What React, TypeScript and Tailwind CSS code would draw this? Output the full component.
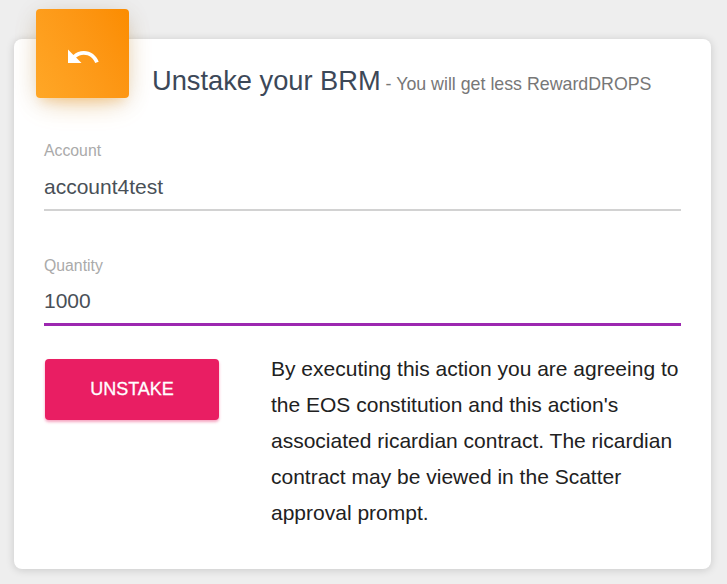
import { MdUndo } from 'react-icons/md';

interface FieldProps {
    id: string;
    label: string;
    value: string;
    active?: boolean;
}

function Field({ id, label, value, active = false }: FieldProps) {
    return (
        <div className="flex flex-col">
            <label htmlFor={id} className="text-[15.8px] leading-6 text-[#aaaaaa]">{label}</label>
            <input
                id={id}
                defaultValue={value}
                className={`h-12 w-full bg-transparent text-[21px] text-[#495057] outline-none ${active ? 'border-b-3 border-[#9c27b0]' : 'border-b-2 border-[#d2d2d2] pt-0.5'}`}
            />
        </div>
    );
}

export default function App() {
    return (
        <div className="h-[584px] bg-[#eeeeee] px-3.5 pt-[39px] font-['Liberation_Sans',Arial,sans-serif]">
            <div className="h-[530px] w-[697px] rounded-[8px] bg-white px-[30px] shadow-[0_1px_8px_rgba(0,0,0,0.16)]">
                <div className="flex h-[100px]">
                    <div className="-mt-[30px] -ml-2 flex h-[89px] w-[93px] items-center justify-center rounded-[4px] bg-linear-60 from-[#ffa726] to-[#fb8c00] pt-1.5 text-white shadow-[0_10px_30px_-10px_rgba(255,152,0,0.42),0_4px_25px_0_rgba(0,0,0,0.1),0_8px_10px_-5px_rgba(255,152,0,0.2)]">
                        <MdUndo className="h-9 w-9" />
                    </div>
                    <h4 className="ml-[23px] pt-6 text-[27.25px] leading-9 whitespace-nowrap text-[#3c4858]">
                        Unstake your BRM<small className="text-[17.8px] text-[#777777]"> - You will get less RewardDROPS</small>
                    </h4>
                </div>
                <div className="flex flex-col gap-[43px]">
                    <Field id="account" label="Account" value="account4test" />
                    <Field id="quantity" label="Quantity" value="1000" active />
                </div>
                <div className="mt-[25px] flex">
                    <button className="mt-2 ml-px h-[61px] w-[174px] shrink-0 rounded-[4px] bg-[#e91e63] text-[18px] text-white shadow-[0_2px_3px_rgba(233,30,99,0.4)] [-webkit-text-stroke:0.3px_white]">
                        UNSTAKE
                    </button>
                    <p className="ml-[52px] w-[412px] shrink-0 text-[21px] leading-9 text-[#212121]">
                        By executing this action you are agreeing to<br />
                        the EOS constitution and this action's<br />
                        associated ricardian contract. The ricardian<br />
                        contract may be viewed in the Scatter<br />
                        approval prompt.
                    </p>
                </div>
            </div>
        </div>
    );
}
